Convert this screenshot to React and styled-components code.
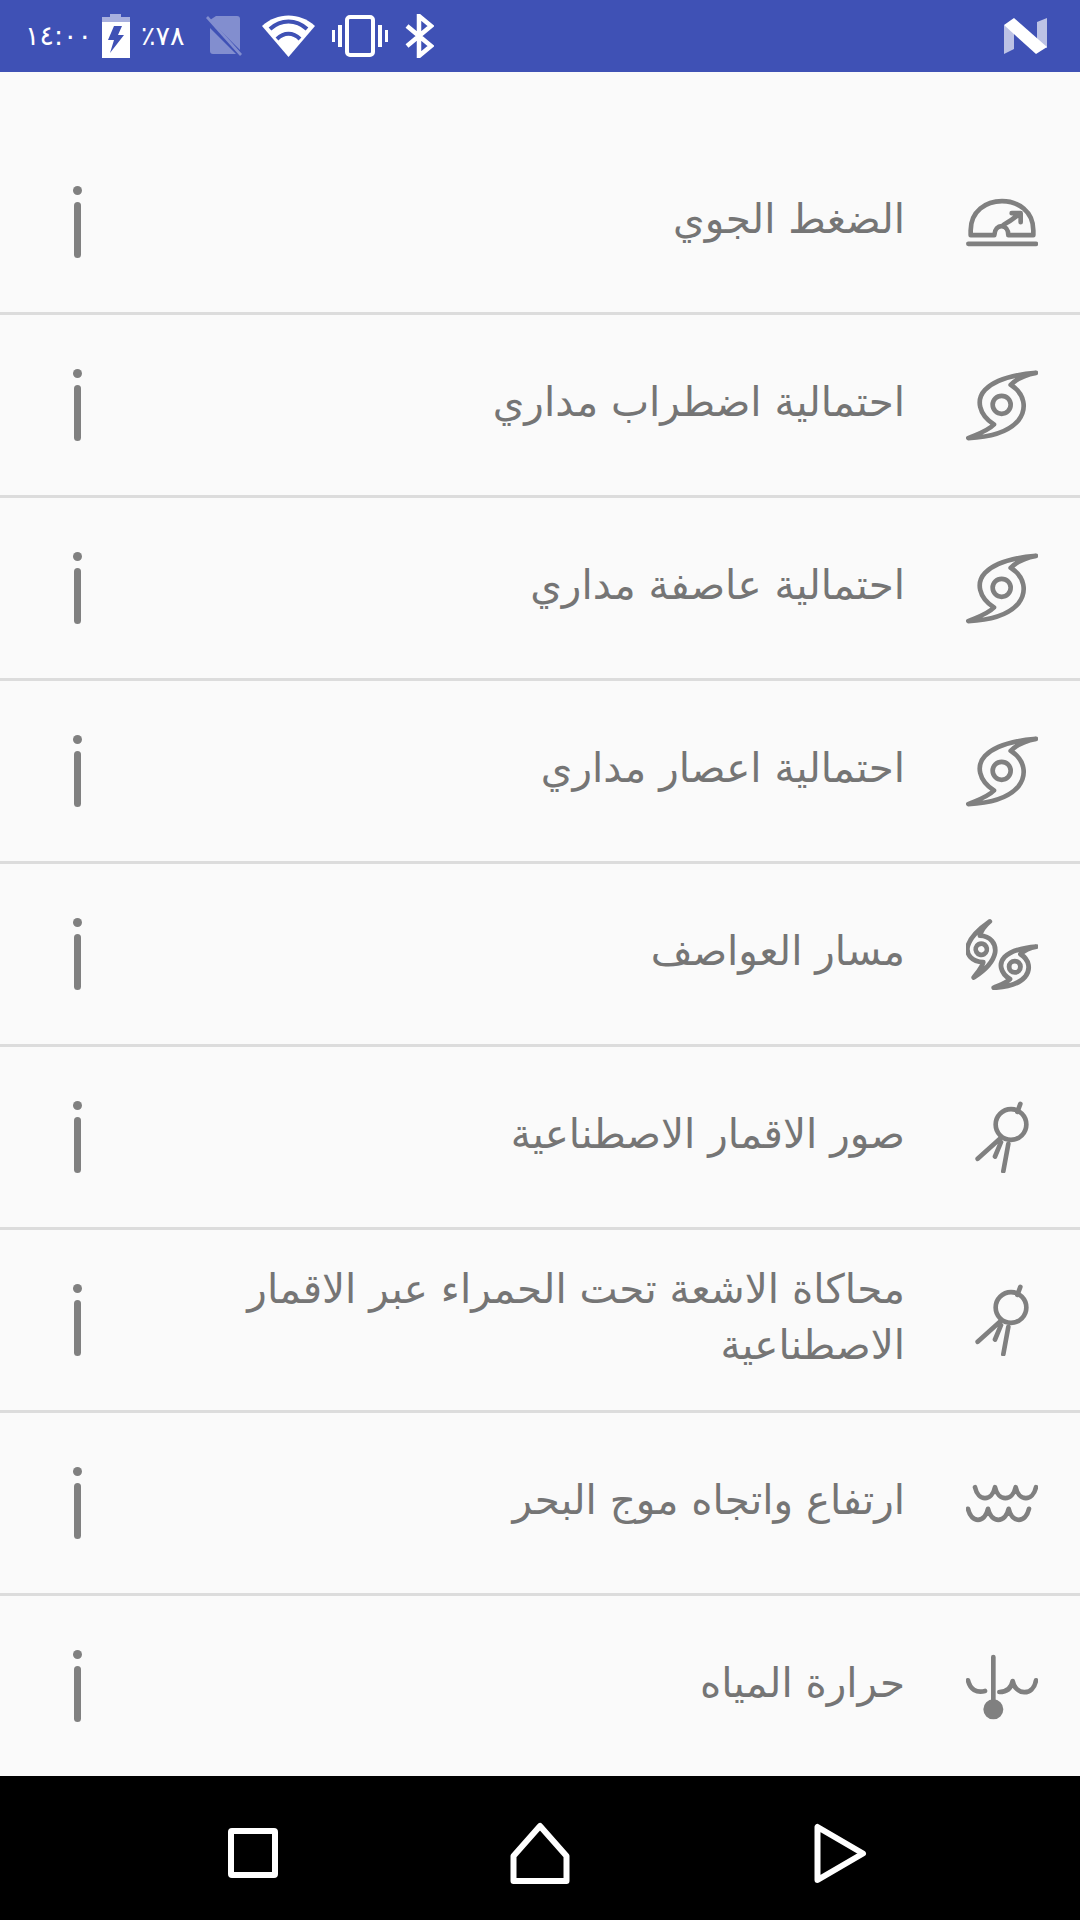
import React from "react";
import styled, { createGlobalStyle } from "styled-components";

const Global = createGlobalStyle`
  html, body { margin: 0; padding: 0; background: #fafafa; }
  #root { width: 1080px; height: 1920px; }
`;

const Page = styled.div`
  width: 1080px;
  height: 1920px;
  display: flex;
  flex-direction: column;
  background: #fafafa;
  overflow: hidden;
`;

const StatusBar = styled.header`
  height: 72px;
  flex: none;
  display: flex;
  align-items: center;
  background: #3f51b5;
  padding: 0 33px 0 25px;
  color: #fff;
`;

const StatusText = styled.span`
  font: 400 ${(p) => p.$size || 27}px/72px "DejaVu Sans", sans-serif;
  direction: ltr;
  unicode-bidi: bidi-override;
  white-space: nowrap;
  width: ${(p) => p.$width}px;
  margin-right: ${(p) => p.$after || 0}px;
`;

const StatusIcon = styled.svg`
  flex: none;
  display: block;
  margin-right: ${(p) => p.$after || 0}px;
`;

const Spacer = styled.div`
  flex: 1;
`;

const List = styled.main`
  flex: 1;
  display: flex;
  flex-direction: column;
  padding-top: 60px;
`;

const Row = styled.div`
  direction: rtl;
  height: 183px;
  flex: none;
  box-sizing: border-box;
  display: flex;
  align-items: center;
  padding: 0 42px 0 73px;
  border-bottom: 3px solid #dcdcdc;
  &:last-child {
    border-bottom: 0;
    height: 180px;
  }
`;

const RowIcon = styled.svg`
  width: 72px;
  height: 72px;
  flex: none;
  display: block;
  fill: none;
  stroke: #808080;
  stroke-linecap: round;
  stroke-linejoin: round;
`;

const Label = styled.div`
  flex: 1;
  margin: 0 61px 6px 90px;
  font: 400 40.5px/56px "DejaVu Sans", sans-serif;
  color: #757575;
  text-align: right;
`;

const InfoIcon = styled.svg`
  width: 9px;
  height: 72px;
  flex: none;
  display: block;
`;

const NavBar = styled.nav`
  height: 144px;
  flex: none;
  box-sizing: border-box;
  display: flex;
  align-items: center;
  background: #000;
  padding: 9px 0 0 225px;
`;

const NavIcon = styled.svg`
  flex: none;
  display: block;
  margin-left: ${(p) => p.$offset || 0}px;
  fill: none;
  stroke: #fff;
  stroke-width: 6;
  stroke-linejoin: round;
`;

const cyclonePath =
  "M288 67C225 72 165 88 135 118C108 147 115 192 162 222C145 240 115 250 85 263C150 260 205 245 235 210C262 175 255 130 212 103C230 85 260 72 288 67Z";

const Cyclone = () => (
  <RowIcon viewBox="78 55.5 216 216" strokeWidth="14">
    <path d={cyclonePath} />
    <circle cx="185" cy="163" r="27" />
  </RowIcon>
);

const DoubleCyclone = () => (
  <RowIcon viewBox="78 52.5 216 216" strokeWidth="14">
    <g transform="translate(125 147) rotate(-30) scale(.62) translate(-186 -165)" strokeWidth="23">
      <path d={cyclonePath} />
      <circle cx="185" cy="163" r="27" />
    </g>
    <g transform="translate(225 200) scale(.63) translate(-186 -165)" strokeWidth="23">
      <path d={cyclonePath} />
      <circle cx="185" cy="163" r="27" />
    </g>
  </RowIcon>
);

const Gauge = () => (
  <RowIcon viewBox="198 556.500 216 216" strokeWidth="14">
    <path d="M212 704V690C212 632 258 602 306 602C354 602 400 632 400 690V704H325C325 668 285 668 283 704Z" />
    <path d="M205 730H408" />
    <path d="M312 672C325 665 340 655 358 640M335 638H362V665" />
  </RowIcon>
);

const Satellite = () => (
  <RowIcon viewBox="78 61.500 216 216" strokeWidth="14">
    <circle cx="213" cy="132" r="46" />
    <path d="M232 94L241 70M183 172L113 235M183 185L165 228M205 190L190 272" />
  </RowIcon>
);

const Waves = () => (
  <RowIcon viewBox="78 19.500 216 216" strokeWidth="14">
    <path d="M105 80C115 124 155 124 165 80C175 124 217 124 227 80C237 124 278 124 288 80" />
    <path d="M84 145C94 189 134 189 144 145C154 189 196 189 206 145C216 189 257 189 267 145" />
  </RowIcon>
);

const Thermometer = () => (
  <RowIcon viewBox="78 567 216 216" strokeWidth="14">
    <path d="M160 588V730" />
    <circle cx="160" cy="745" r="23" fill="#808080" />
    <path d="M84 658C90 685 110 697 135 690" />
    <path d="M178 693C200 693 214 682 218 660C225 702 280 708 288 658" />
  </RowIcon>
);

const Info = () => (
  <InfoIcon viewBox="0 0 9 72">
    <circle cx="4.500" cy="4.500" r="4.500" fill="#808080" />
    <rect x="1" y="16" width="7" height="56" rx="3.500" fill="#808080" />
  </InfoIcon>
);

const rows = [
  [Gauge, "الضغط الجوي"],
  [Cyclone, "احتمالية اضطراب مداري"],
  [Cyclone, "احتمالية عاصفة مداري"],
  [Cyclone, "احتمالية اعصار مداري"],
  [DoubleCyclone, "مسار العواصف"],
  [Satellite, "صور الاقمار الاصطناعية"],
  [Satellite, "محاكاة الاشعة تحت الحمراء عبر الاقمار الاصطناعية"],
  [Waves, "ارتفاع واتجاه موج البحر"],
  [Thermometer, "حرارة المياه"],
];

export default function App() {
  return (
    <Page>
      <Global />
      <StatusBar>
        <StatusText $width={77}>١٤:٠٠</StatusText>
        <StatusIcon $after={11} width="28" height="44" viewBox="0 0 28 44">
          <path fill="#fff" opacity=".55" d="M8 0h11v3h9v7H0V3h8z" />
          <path fill="#fff" d="M0 8h28v36H0z" />
          <path fill="#3f51b5" d="M12 12h8l-4 9h6L8 39l4-13H6z" />
        </StatusIcon>
        <StatusText $width={64} $size={27}>٪٧٨</StatusText>
        <StatusIcon $after={19} width="38" height="42" viewBox="0 0 38 42">
          <g fill="#fff" opacity=".35">
            <path d="M11 1H32q3 0 3 3V35L5 5Z" />
            <path d="M5 13L31 39H8q-3 0-3-3Z" />
            <path d="M1 3L3 1 37 39 35 41Z" />
          </g>
        </StatusIcon>
        <StatusIcon $after={17} width="53" height="42" viewBox="0 0 53 42">
          <path fill="#fff" d="M26.500 42L0 11C15-3 38-3 53 11z" />
          <path fill="none" stroke="#3f51b5" strokeWidth="4" d="M8 14C19 4 34 4 45 14M15 24C22 17 31 17 38 24" />
        </StatusIcon>
        <StatusIcon $after={17} width="56" height="42" viewBox="0 0 56 42">
          <rect x="15" y="2" width="26" height="38" rx="3" fill="none" stroke="#fff" strokeWidth="4" />
          <path fill="#fff" d="M6 10h4v22H6zM46 10h4v22h-4zM0 15h3v12H0zM53 15h3v12h-3z" />
        </StatusIcon>
        <StatusIcon width="29" height="44" viewBox="0 0 29 44">
          <path fill="none" stroke="#fff" strokeWidth="4.500" strokeLinejoin="miter" d="M2 12L26 32 14 42V2l12 10L2 32" />
        </StatusIcon>
        <Spacer />
        <StatusIcon width="43" height="36" viewBox="0 0 43 36">
          <path fill="#fff" opacity=".65" d="M0 7L10 12V31L0 36zM43 0V30L33 26V4z" />
          <path fill="#fff" d="M0 7L10 0 43 29 32 36z" />
        </StatusIcon>
      </StatusBar>
      <List>
        {rows.map(([Icon, text], i) => (
          <Row key={i}>
            <Icon />
            <Label>{text}</Label>
            <Info />
          </Row>
        ))}
      </List>
      <NavBar>
        <NavIcon width="56" height="56" viewBox="0 0 56 56">
          <rect x="6" y="6" width="44" height="44" rx="1" />
        </NavIcon>
        <NavIcon $offset={226} width="66" height="66" viewBox="0 0 66 66">
          <path d="M33 6L6.500 36V61H59.500V36Z" />
        </NavIcon>
        <NavIcon $offset={238} width="58" height="64" viewBox="0 0 58 64">
          <path d="M6.500 6V59L52 32.500Z" />
        </NavIcon>
      </NavBar>
    </Page>
  );
}
